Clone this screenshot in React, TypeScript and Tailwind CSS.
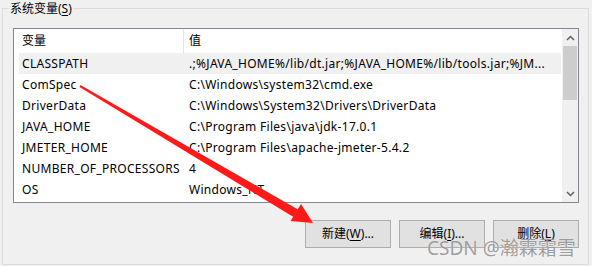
import React from "react";

const rows: [string, string][] = [
  ["CLASSPATH", ".;%JAVA_HOME%/lib/dt.jar;%JAVA_HOME%/lib/tools.jar;%JM..."],
  ["ComSpec", "C:\\Windows\\system32\\cmd.exe"],
  ["DriverData", "C:\\Windows\\System32\\Drivers\\DriverData"],
  ["JAVA_HOME", "C:\\Program Files\\java\\jdk-17.0.1"],
  ["JMETER_HOME", "C:\\Program Files\\apache-jmeter-5.4.2"],
  ["NUMBER_OF_PROCESSORS", "4"],
  ["OS", "Windows_NT"],
];

const font = { fontFamily: '"Noto Sans", "Noto Sans CJK SC", sans-serif' };

function Btn({ label, u, dots }: { label: string; u: string; dots?: boolean }) {
  return (
    <div className="w-[86px] h-[28px] border border-[#adadad] bg-[#e1e1e1] flex items-center justify-center text-[12px] text-black">
      <span>
        {label}(<span className="underline underline-offset-2">{u}</span>){dots ? "..." : ""}
      </span>
    </div>
  );
}

export default function App() {
  return (
    <div className="relative w-[592px] h-[266px] bg-[#f0f0f0] overflow-hidden pt-[8px] pl-[2px]" style={font}>
      <div className="w-[587px] h-[257px] border border-[#dcdcdc] flex flex-col">
        <div className="-mt-[8px] h-[16px] leading-[16px] ml-[6px] self-start px-[1px] bg-[#f0f0f0] text-[12px] text-black">
          系统变量(<span className="underline underline-offset-2">S</span>)
        </div>
        <div className="mt-[11px] ml-[10px] w-[566px] h-[175px] border border-[#828790] bg-white flex">
          <div className="flex-1 pl-[5px] pr-[1px] flex flex-col text-[12px] text-black">
            <div className="h-[24px] flex items-center">
              <div className="w-[164px] pl-[3px]">变量</div>
              <div className="w-px h-[24px] bg-[#e5e5e5]" />
              <div className="pl-[5px]">值</div>
            </div>
            {rows.map(([k, v], i) => (
              <div key={k} className={`h-[21px] flex items-center whitespace-nowrap tracking-[0.3px] ${i === 0 ? "bg-[#f0f0f0]" : ""}`}>
                <div className="w-[165px] pl-[3px]">{k}</div>
                <div className="pl-[5px]">{v}</div>
              </div>
            ))}
          </div>
          <div className="w-[16px] bg-[#f0f0f0] flex flex-col">
            <div className="h-[17px] flex items-center justify-center">
              <svg width="9" height="6" viewBox="0 0 9 6">
                <path d="M1 5 L4.5 1.5 L8 5" fill="none" stroke="#606060" strokeWidth="1.5" />
              </svg>
            </div>
            <div className="h-[54px] mx-[1px] bg-[#cdcdcd]" />
            <div className="flex-1" />
            <div className="h-[17px] flex items-center justify-center">
              <svg width="9" height="6" viewBox="0 0 9 6">
                <path d="M1 1 L4.5 4.5 L8 1" fill="none" stroke="#606060" strokeWidth="1.5" />
              </svg>
            </div>
          </div>
        </div>
        <div className="mt-[17px] flex justify-end gap-[8px] mr-[9px]">
          <Btn label="新建" u="W" dots />
          <Btn label="编辑" u="I" dots />
          <Btn label="删除" u="L" />
        </div>
      </div>
      <div
        className="absolute left-[427px] top-[236px] text-[19px] leading-[24px] text-[rgba(115,115,115,0.7)] whitespace-nowrap"
        style={{ ...font, textShadow: "0 0 1px rgba(255,255,255,0.9)" }}
      >
        CSDN @瀚霖霜雪
      </div>
      <svg className="absolute left-0 top-0" width="592" height="266" viewBox="0 0 592 266">
        <polygon points="79.5,86.9 80.5,85.1 298,209.5 293.5,217" fill="#ff1a1a" />
        <polygon points="313,223 290.5,221 301,204" fill="#ff1a1a" />
      </svg>
    </div>
  );
}
